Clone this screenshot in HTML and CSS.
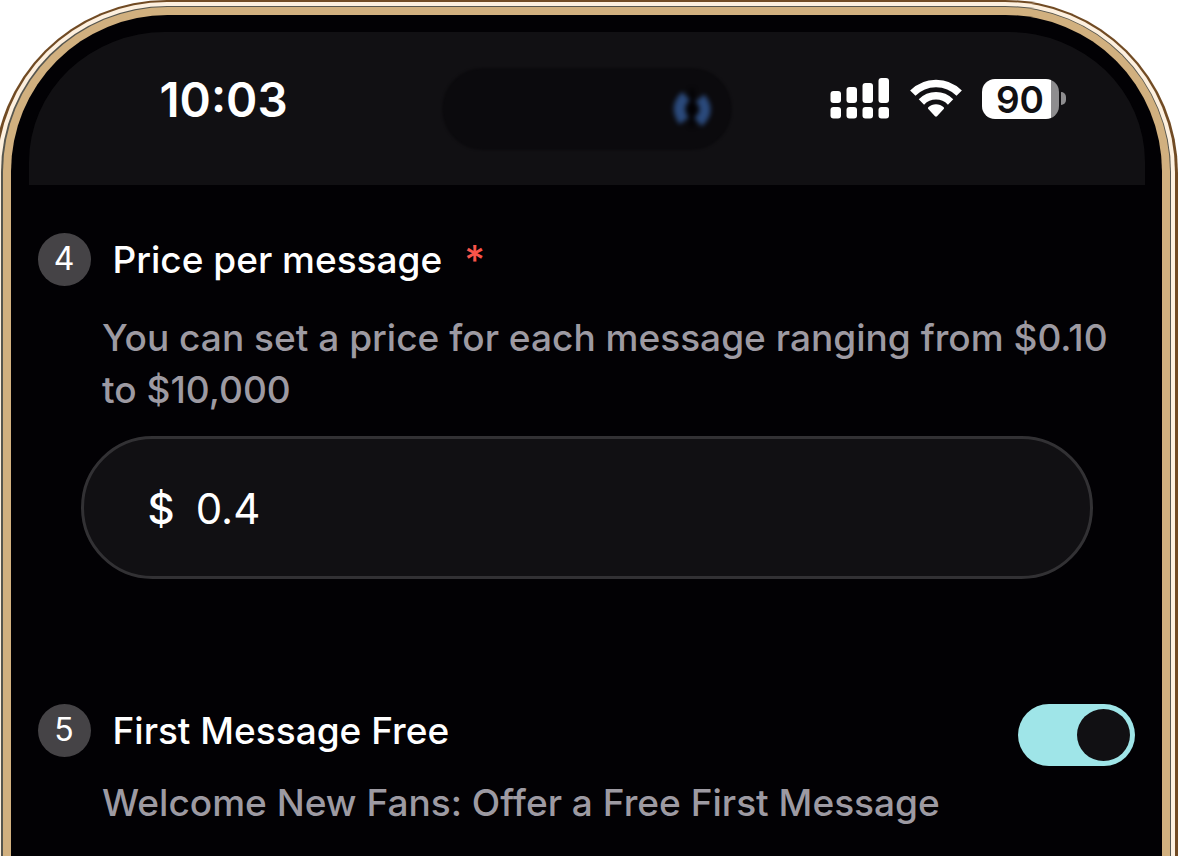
FILE: index.html
```html
<!DOCTYPE html>
<html lang="en">
<head>
    <meta charset="UTF-8">
    <meta name="viewport" content="width=device-width, initial-scale=1.0">
    <title>Message pricing</title>
    <link rel="stylesheet" href="styles.css">
</head>
<body>
    <div class="phone">
        <div class="rim">
            <div class="seam">
                <div class="bezel">

                    <header class="status-bar">
                        <span class="time">10:03</span>
                        <div class="island">
                            <svg class="lens" width="60" height="60" viewBox="0 0 60 60">
                                <g fill="none" stroke="#2b4a7c" stroke-width="11">
                                    <path d="M25 17 Q13 28 23 42"/>
                                    <path d="M39 19 Q50 32 37 43"/>
                                </g>
                                <path d="M31 10 V48" stroke="#020104" stroke-width="4"/>
                                <ellipse cx="31" cy="30" rx="6" ry="6" fill="#020104"/>
                            </svg>
                        </div>
                        <div class="indicators">
                            <svg class="signal" width="60" height="42" viewBox="0 0 60 42" fill="#fff">
                                <rect x="0.5" y="13" width="10.5" height="12" rx="3"/>
                                <rect x="16.5" y="9" width="10.5" height="16" rx="3"/>
                                <rect x="32.5" y="5" width="10.5" height="20" rx="3"/>
                                <rect x="48.5" y="0" width="10.5" height="25" rx="3"/>
                                <rect x="0.5" y="29" width="10.5" height="11.5" rx="3"/>
                                <rect x="16.5" y="29" width="10.5" height="11.5" rx="3"/>
                                <rect x="32.5" y="29" width="10.5" height="11.5" rx="3"/>
                                <rect x="48.5" y="29" width="10.5" height="11.5" rx="3"/>
                            </svg>
                            <svg class="wifi" width="52" height="40" viewBox="0 0 52 40">
                                <g fill="none" stroke="#fff" stroke-width="7.5">
                                    <path d="M2.8 14.2 C15.5 1.2 36.5 1.2 49.2 14.2"/>
                                    <path d="M11.4 23 C19.5 14.8 32.5 14.8 40.6 23"/>
                                </g>
                                <path d="M18.3 28.2 C22.5 24.2 29.5 24.2 33.7 28.2 Q34.5 29.2 33.7 30 L27 37.3 Q26 38.2 25 37.3 L18.3 30 Q17.5 29.2 18.3 28.2 Z" fill="#fff"/>
                            </svg>
                            <div class="battery"><span>90</span></div>
                            <span class="battery-tip"></span>
                        </div>
                    </header>

                    <main class="form">
                        <section class="price">
                            <div class="heading">
                                <span class="step">4</span>
                                <h2>Price per message</h2>
                                <span class="required">*</span>
                            </div>
                            <p class="hint">You can set a price for each message ranging from $0.10<br>to $10,000</p>
                            <div class="field">
                                <span class="currency">$</span>
                                <span class="amount">0.4</span>
                            </div>
                        </section>

                        <section class="free">
                            <div class="heading">
                                <span class="step">5</span>
                                <h2>First Message Free</h2>
                                <div class="toggle"><span class="knob"></span></div>
                            </div>
                            <p class="hint hint-free">Welcome New Fans: Offer a Free First Message</p>
                        </section>
                    </main>

                </div>
            </div>
        </div>
    </div>
</body>
</html>
```
FILE: styles.css
```css
* {
    box-sizing: border-box;
}

body {
    margin: 0;
    height: 856px;
    overflow: hidden;
    background: #fff;
    font-family: Inter, sans-serif;
    color: #fff;
}

/* metal frame, from the outside in */
.phone {
    width: 1184px;
    height: 856px;
    margin-left: -6px;
    padding: 2px 3px 0;
    border-radius: 173px 173px 0 0;
    background: #714b24;
}

.rim {
    height: 100%;
    padding: 4px 4px 0;
    border-radius: 170px 170px 0 0;
    background: #fdf0df;
}

.seam {
    height: 100%;
    padding: 1px 1.5px 0;
    border-radius: 166px 166px 0 0;
    background: #56564f;
}

.bezel {
    height: 100%;
    padding: 17px 17px 0 18px;
    border: 8px solid #d1b07f;
    border-bottom: 0;
    border-radius: 164.5px 164.5px 0 0;
    background: #020104;
}

.status-bar {
    display: flex;
    align-items: flex-start;
    height: 153px;
    border-radius: 136px 136px 0 0 / 130px 130px 0 0;
    background: #111013;
}

.time {
    flex: none;
    width: 282px;
    margin: 39px 0 0 131px;
    font-size: 47.5px;
    font-weight: 600;
    line-height: 58px;
    white-space: nowrap;
}

.island {
    flex: none;
    width: 290px;
    height: 82px;
    margin-top: 36px;
    padding: 11px 0 0 219px;
    border-radius: 41px;
    background: #0b0a0d;
    filter: blur(1px);
}

.lens {
    display: block;
    filter: blur(2px);
}

.indicators {
    display: flex;
    align-items: center;
    margin: 46px 0 0 98px;
    height: 41px;
}

.wifi {
    margin-left: 20px;
}

.battery {
    width: 77px;
    height: 40px;
    margin-left: 20px;
    border-radius: 13px;
    background: linear-gradient(to right, #fff 69px, #8e8d8f 69px);
    color: #111013;
    font-size: 37px;
    font-weight: 600;
    line-height: 41px;
    text-align: center;
}

.battery-tip {
    width: 5px;
    height: 13px;
    margin-left: 2px;
    border-radius: 0 6px 6px 0;
    background: #8e8d8f;
}

.form {
    padding: 48px 10px 0 9px;
}

.heading {
    display: flex;
    align-items: flex-start;
    height: 53px;
}

.step {
    width: 53px;
    height: 53px;
    border-radius: 50%;
    background: #454346;
    font-size: 32px;
    line-height: 52px;
    text-align: center;
}

h2 {
    margin: 0 0 0 22px;
    font-size: 37px;
    font-weight: 500;
    line-height: 53px;
    white-space: nowrap;
}

.required {
    margin-left: 22px;
    color: #f9544a;
    font-size: 40px;
    font-weight: 500;
    line-height: 54px;
}

.hint {
    margin: 26px 0 0 64.5px;
    color: #9d9aa2;
    font-size: 37.05px;
    font-weight: 500;
    line-height: 52px;
    white-space: nowrap;
}

.field {
    display: flex;
    align-items: center;
    width: 1012px;
    height: 143px;
    margin: 20px 0 0 43px;
    padding: 2px 0 0 64px;
    border: 3px solid #323134;
    border-radius: 72px;
    background: #111013;
    font-size: 42px;
}

.currency {
    font-weight: 500;
}

.amount {
    margin-left: 21px;
}

.free {
    margin-top: 125px;
}

.toggle {
    width: 117px;
    height: 62px;
    margin-left: auto;
    padding: 5px 5px 0 59px;
    border-radius: 31px;
    background: #9fe5e8;
}

.knob {
    display: block;
    width: 53px;
    height: 52px;
    border-radius: 50%;
    background: #111013;
}

.hint-free {
    margin-top: 20px;
}
```
